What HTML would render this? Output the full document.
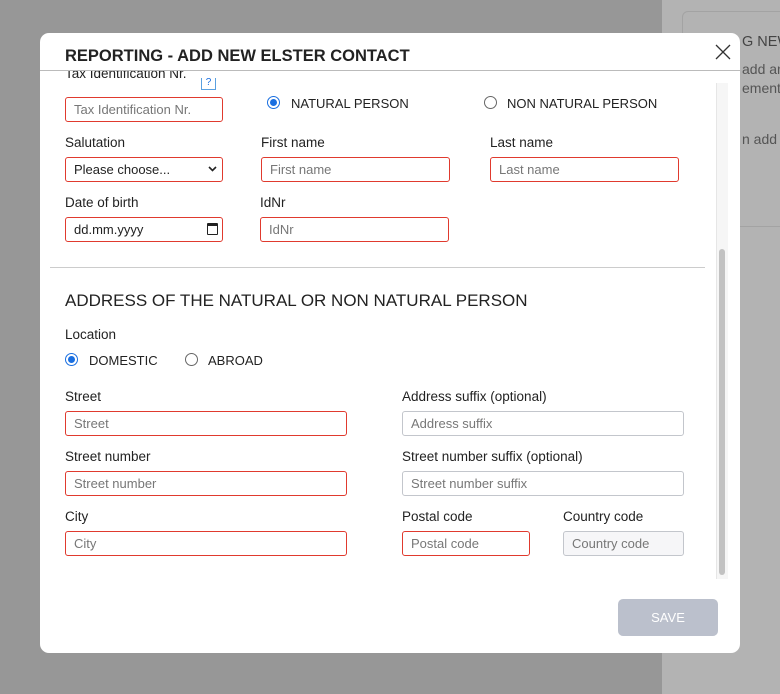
<!DOCTYPE html>
<html><head><style>
*{box-sizing:border-box;margin:0;padding:0}
body{width:780px;height:694px;position:relative;overflow:hidden;background:#979797;font-family:"Liberation Sans",sans-serif;color:#222}
.rt{position:absolute;left:662px;top:0;width:118px;height:694px;background:#b3b3b3}
.card{position:absolute;left:682px;top:11px;width:120px;height:216px;border:1px solid #a3a3a3;border-radius:6px}
.modal{position:absolute;left:40px;top:33px;width:700px;height:620px;background:#fff;border-radius:9px;overflow:hidden}
.a{position:absolute;white-space:nowrap}
.lbl{font-size:13.5px;color:#222}
.in{position:absolute;height:25px;border:1px solid #e03a2e;border-radius:3px;font-size:13px;color:#777;padding:4px 0 0 8px;background:#fff}
.g{border-color:#c3c6cc}
.rad{position:absolute;width:13px;height:13px;border-radius:50%;border:1px solid #666}
.rad.on{border:1px solid #1a6fe0}
.rad.on::after{content:"";position:absolute;left:2px;top:2px;width:7px;height:7px;border-radius:50%;background:#1a6fe0}
</style></head><body>
<div class="rt"></div>
<div class="card"></div>
<div class="a" style="left:742px;top:34px;font-size:14.5px;color:#444">G NEW</div>
<div class="a" style="left:742px;top:61px;font-size:14px;color:#555">add an</div>
<div class="a" style="left:742px;top:80px;font-size:14px;color:#555">ement(</div>
<div class="a" style="left:742px;top:131px;font-size:14px;color:#555">n add t</div>
<div class="modal">
  <div class="a" style="left:25px;top:14px;font-size:16.5px;font-weight:bold;color:#222">REPORTING - ADD NEW ELSTER CONTACT</div>
  <svg class="a" style="left:674px;top:10px" width="18" height="18"><path d="M2 2L16 16M16 2L2 16" stroke="#333" stroke-width="1.3"/></svg>
  <div class="a" style="left:0;top:37px;width:700px;height:1px;background:#bbb"></div>
  <div class="a lbl" style="left:25px;top:38px;height:12px;overflow:hidden"><span style="position:relative;top:-5px">Tax Identification Nr.</span></div>
  <div class="a" style="left:161px;top:45px;width:15px;height:12px;border:1px solid #5aa0e0;border-top:none;font-size:10px;color:#1a6fe0;text-align:center;line-height:9px">?</div>
  <div class="in" style="left:25px;top:64px;width:158px">Tax Identification Nr.</div>
  <div class="rad on" style="left:227px;top:63px"></div>
  <div class="a lbl" style="left:251px;top:63px;font-size:13px">NATURAL PERSON</div>
  <div class="rad" style="left:444px;top:63px"></div>
  <div class="a lbl" style="left:467px;top:63px;font-size:13px">NON NATURAL PERSON</div>
  <div class="a lbl" style="left:25px;top:102px">Salutation</div>
  <div class="a lbl" style="left:221px;top:102px">First name</div>
  <div class="a lbl" style="left:450px;top:102px">Last name</div>
  <div class="in" style="left:25px;top:124px;width:158px;color:#222">Please choose...<svg style="position:absolute;right:5px;top:8px" width="9" height="6"><path d="M1 1L4.5 4.5L8 1" stroke="#222" stroke-width="1.6" fill="none"/></svg></div>
  <div class="in" style="left:221px;top:124px;width:189px">First name</div>
  <div class="in" style="left:450px;top:124px;width:189px">Last name</div>
  <div class="a lbl" style="left:25px;top:162px">Date of birth</div>
  <div class="a lbl" style="left:220px;top:162px">IdNr</div>
  <div class="in" style="left:25px;top:184px;width:158px;color:#222">dd.mm.yyyy<span style="position:absolute;right:4px;top:5px;width:11px;height:12px;border:1.5px solid #222;border-top-width:3px;border-radius:1px"></span></div>
  <div class="in" style="left:220px;top:184px;width:189px">IdNr</div>
  <div class="a" style="left:10px;top:234px;width:655px;height:1px;background:#ccc"></div>
  <div class="a" style="left:25px;top:258px;font-size:17px;color:#222">ADDRESS OF THE NATURAL OR NON NATURAL PERSON</div>
  <div class="a lbl" style="left:25px;top:294px">Location</div>
  <div class="rad on" style="left:25px;top:320px"></div>
  <div class="a lbl" style="left:49px;top:320px;font-size:13px">DOMESTIC</div>
  <div class="rad" style="left:145px;top:320px"></div>
  <div class="a lbl" style="left:168px;top:320px;font-size:13px">ABROAD</div>
  <div class="a lbl" style="left:25px;top:356px">Street</div>
  <div class="a lbl" style="left:362px;top:356px">Address suffix (optional)</div>
  <div class="in" style="left:25px;top:378px;width:282px">Street</div>
  <div class="in g" style="left:362px;top:378px;width:282px">Address suffix</div>
  <div class="a lbl" style="left:25px;top:416px">Street number</div>
  <div class="a lbl" style="left:362px;top:416px">Street number suffix (optional)</div>
  <div class="in" style="left:25px;top:438px;width:282px">Street number</div>
  <div class="in g" style="left:362px;top:438px;width:282px">Street number suffix</div>
  <div class="a lbl" style="left:25px;top:476px">City</div>
  <div class="a lbl" style="left:362px;top:476px">Postal code</div>
  <div class="a lbl" style="left:523px;top:476px">Country code</div>
  <div class="in" style="left:25px;top:498px;width:282px">City</div>
  <div class="in" style="left:362px;top:498px;width:128px">Postal code</div>
  <div class="in g" style="left:523px;top:498px;width:121px;background:#f6f6f8">Country code</div>
  <div class="a" style="left:676px;top:50px;width:12px;height:496px;background:#f6f6f6;border-left:1px solid #e6e6e6"></div>
  <div class="a" style="left:679px;top:216px;width:6px;height:326px;background:#c2c2c2;border-radius:3px"></div>
  <div class="a" style="left:578px;top:566px;width:100px;height:37px;background:#bbc0cc;border-radius:5px;color:#fff;font-size:13px;text-align:center;line-height:37px">SAVE</div>
</div>
</body></html>
